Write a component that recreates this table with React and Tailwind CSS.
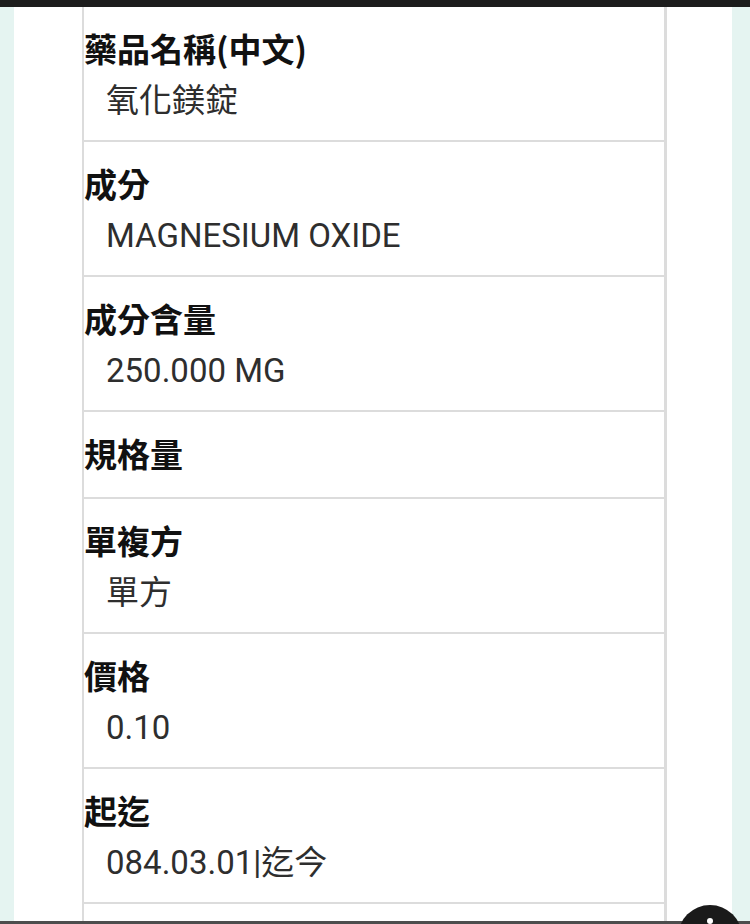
const rows = [
  { label: "藥品名稱(中文)", value: "氧化鎂錠" },
  { label: "成分", value: "MAGNESIUM OXIDE" },
  { label: "成分含量", value: "250.000 MG" },
  { label: "規格量", value: "" },
  { label: "單複方", value: "單方" },
  { label: "價格", value: "0.10" },
  { label: "起迄", value: "084.03.01|迄今" },
];

const App = () => {
  return (
    <div className="relative h-[924px] w-[750px] overflow-hidden bg-white">
      <div className="h-[7px] bg-[#1c1d1c]" />
      <div className="flex h-[917px]">
        <div className="w-[14px] bg-[#e5f4f1]" />
        <div className="flex-1 bg-white pl-[68px]">
          <div className="w-[585px] border-l-2 border-r-[3px] border-[#dcdcdc]">
            {rows.map((row, index) => (
              <div
                key={index}
                className="border-b-2 border-[#dcdcdc] pt-[19px] pb-[22px]"
              >
                <div className="text-[33px] font-bold leading-[44px] text-[#111] font-['Noto_Sans_CJK_TC',sans-serif]">
                  {row.label}
                </div>
                {row.value && (
                  <div className="mt-[9px] -mb-[5px] pl-[22px] text-[33px] leading-[44px] text-[#2e2e2e] font-['Roboto','Noto_Sans_CJK_TC',sans-serif]">
                    {row.value}
                  </div>
                )}
              </div>
            ))}
            <div className="h-[120px]" />
          </div>
        </div>
        <div className="w-[18px] bg-[#e5f4f1]" />
      </div>
      <div className="absolute bottom-0 left-0 h-[3px] w-full bg-[#4d4d4d]" />
      <div className="absolute left-[678px] top-[905px] flex h-[64px] w-[64px] justify-center rounded-full bg-[#1a1a1a] pt-[13px]">
        <div className="h-[6px] w-[6px] rounded-full bg-white" />
      </div>
    </div>
  );
};

export default App;
